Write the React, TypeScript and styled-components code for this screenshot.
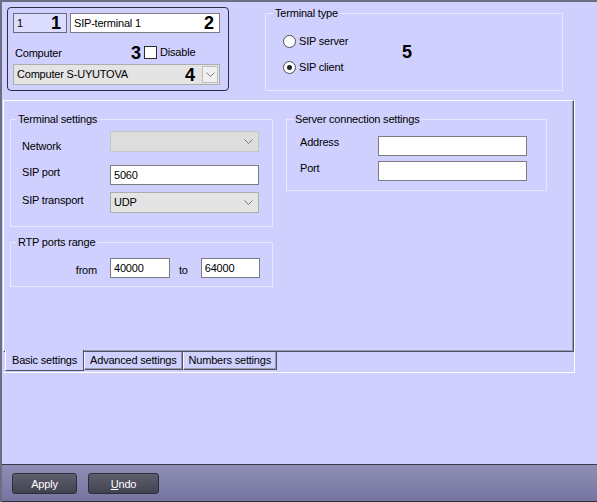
import React from 'react';
import styled, { createGlobalStyle } from 'styled-components';

const LAVENDER = '#d0d0fe';
const DARK_EDGE = '#505062';

const GlobalStyle = createGlobalStyle`
  html, body {
    margin: 0;
    padding: 0;
    background: ${LAVENDER};
  }
  body {
    font-family: "Liberation Sans", Arial, sans-serif;
    font-size: 11px;
    line-height: 13px;
    color: #000;
    overflow: hidden;
  }
  * {
    box-sizing: border-box;
  }
`;

const Window = styled.div`
  width: 597px;
  height: 502px;
  display: flex;
  flex-direction: column;
  background: ${LAVENDER};
  border-top: 2px solid #6e6e82;
  border-left: 2px solid #6e6e82;
  letter-spacing: -0.2px;
`;

/* ---------- header ---------- */

const Header = styled.div`
  display: flex;
  align-items: flex-start;
  height: 98px;
  padding: 5px 0 0 5px;
`;

const IdentityCard = styled.div`
  width: 222px;
  height: 84px;
  border: 1px solid #2e2e3e;
  border-radius: 4px;
  padding: 5px 8px 0 5px;
  display: flex;
  flex-direction: column;
`;

const CardRow = styled.div<{ $top?: number; $h?: number }>`
  display: flex;
  align-items: center;
  gap: 3px;
  margin-top: ${p => p.$top ?? 0}px;
  ${p => (p.$h ? `height: ${p.$h}px;` : '')}
`;

const Field = styled.div<{ $w: number; $h?: number }>`
  position: relative;
  width: ${p => p.$w}px;
  height: ${p => p.$h ?? 20}px;
`;

const TextBox = styled.div<{ $readOnly?: boolean }>`
  width: 100%;
  height: 100%;
  display: flex;
  align-items: center;
  padding: 0 2px 0 3px;
  background: ${p => (p.$readOnly ? '#dcdcfe' : '#fff')};
  border: 1px solid ${p => (p.$readOnly ? '#6a6a7a' : '#7c7c84')};
  white-space: nowrap;
`;

const Callout = styled.span<{ $right?: number }>`
  position: absolute;
  right: ${p => p.$right ?? 6}px;
  top: 50%;
  transform: translateY(-50%);
  font-family: Arial, "Liberation Sans", sans-serif;
  font-weight: bold;
  font-size: 18px;
  line-height: 18px;
  letter-spacing: 0;
`;

const Marker = styled.span<{ $top?: number }>`
  font-family: Arial, "Liberation Sans", sans-serif;
  font-weight: bold;
  font-size: 18px;
  line-height: 18px;
  letter-spacing: 0;
  margin-top: ${p => p.$top ?? 0}px;
`;

const CardLabel = styled.span`
  width: 115px;
  padding-left: 2px;
  padding-top: 1px;
`;

const CheckBox = styled.span`
  display: inline-block;
  width: 13px;
  height: 13px;
  background: #fff;
  border: 1px solid #2c2c2c;
`;

const Combo = styled.div<{ $disabled?: boolean }>`
  width: 100%;
  height: 100%;
  display: flex;
  align-items: center;
  justify-content: space-between;
  padding: 0 5px 0 3px;
  background: ${p => (p.$disabled ? '#dddddd' : '#e4e4e4')};
  border: 1px solid ${p => (p.$disabled ? '#c6c6c6' : '#adadad')};
  white-space: nowrap;
`;

const DropButton = styled.span`
  width: 16px;
  height: 17px;
  display: flex;
  align-items: center;
  justify-content: center;
  background: #f0f0f0;
  border: 1px solid #bdbdbd;
  margin-right: -4px;
`;

const Chevron = () => (
  <svg width="9" height="5" viewBox="0 0 9 5">
    <polyline points="0.5,0.5 4.5,4.5 8.5,0.5" fill="none" stroke="#7a7a7a" strokeWidth="1" />
  </svg>
);

/* ---------- group boxes ---------- */

const GroupBox = styled.fieldset<{ $w: number; $h?: number; $pad: string; $ml?: number }>`
  margin: 0 0 0 ${p => p.$ml ?? 0}px;
  padding: ${p => p.$pad};
  width: ${p => p.$w}px;
  ${p => (p.$h ? `height: ${p.$h}px;` : '')}
  border: 1px solid #e8e8fe;
  min-width: 0;
`;

// legend sits after the fieldset's left padding, so pull it back by $shift
const Caption = styled.legend<{ $shift: number }>`
  padding: 0 2px;
  margin-left: ${p => p.$shift}px;
  line-height: 12px;
`;

const FormRow = styled.div<{ $top?: number; $h?: number }>`
  display: flex;
  align-items: flex-start;
  height: ${p => p.$h ?? 20}px;
  margin-top: ${p => p.$top ?? 0}px;
`;

const RowLabel = styled.span<{ $w: number; $drop?: number; $right?: boolean }>`
  width: ${p => p.$w}px;
  padding-top: ${p => p.$drop ?? 0}px;
  text-align: ${p => (p.$right ? 'right' : 'left')};
  padding-right: ${p => (p.$right ? 13 : 0)}px;
  white-space: nowrap;
`;

const InlineLabel = styled.span<{ $drop?: number }>`
  padding-top: ${p => p.$drop ?? 0}px;
  margin: 0 13px 0 9px;
`;

/* ---------- terminal type ---------- */

const TypeBody = styled.div`
  display: flex;
  align-items: flex-start;
`;

const RadioList = styled.div`
  width: 119px;
  display: flex;
  flex-direction: column;
  gap: 13px;
`;

const RadioRow = styled.label`
  display: flex;
  align-items: center;
  gap: 3px;
  height: 13px;
`;

const RadioDot = styled.span<{ $checked?: boolean }>`
  width: 13px;
  height: 13px;
  border-radius: 50%;
  background: #fff;
  border: 1px solid #4c4c56;
  display: flex;
  align-items: center;
  justify-content: center;
  &::after {
    content: '';
    width: 5px;
    height: 5px;
    border-radius: 50%;
    background: ${p => (p.$checked ? '#222' : 'transparent')};
  }
`;

/* ---------- tabs ---------- */

const TabControl = styled.div`
  margin-left: 1px;
  width: 572px;
  border-right: 1px solid #fff;
  border-bottom: 1px solid #fff;
`;

const TabPage = styled.div`
  height: 252px;
  display: flex;
  align-items: flex-start;
  gap: 13px;
  padding: 12px 0 0 6px;
  border-top: 1px solid #fff;
  border-left: 1px solid #fff;
  border-right: 1px solid ${DARK_EDGE};
  border-bottom: 1px solid ${DARK_EDGE};
  box-shadow: inset -1px -1px 0 #9a9ab0;
`;

const Column = styled.div`
  display: flex;
  flex-direction: column;
  gap: 9px;
`;

const TabStrip = styled.div`
  display: flex;
  align-items: flex-start;
  height: 20px;
  padding-left: 2px;
`;

const Tab = styled.div<{ $active?: boolean }>`
  height: ${p => (p.$active ? 21 : 18)}px;
  margin-top: ${p => (p.$active ? -2 : 0)}px;
  padding: 0 ${p => (p.$active ? 6 : 5)}px;
  display: flex;
  align-items: center;
  background: ${LAVENDER};
  border-left: 1px solid ${p => (p.$active ? '#ffffff' : '#f6f6ff')};
  border-right: 1px solid ${DARK_EDGE};
  border-bottom: 1px solid ${DARK_EDGE};
  box-shadow: ${p => (p.$active ? 'none' : 'inset -1px -1px 0 #9a9ab0')};
  white-space: nowrap;
`;

const Filler = styled.div`
  flex: 1;
`;

/* ---------- footer ---------- */

const Footer = styled.div`
  height: 38px;
  display: flex;
  align-items: flex-start;
  gap: 11px;
  padding: 8px 0 0 10px;
  border-top: 1px solid #3a3a4c;
  border-bottom: 1px solid #2c2c3a;
  background: linear-gradient(#8e8eb6, #7575a0);
`;

const ActionButton = styled.button<{ $w: number }>`
  width: ${p => p.$w}px;
  height: 21px;
  padding: 0;
  border: 1px solid #2e2e3a;
  border-radius: 3px;
  background: linear-gradient(#5e5e6e, #424250);
  color: #fff;
  font-family: "Liberation Sans", Arial, sans-serif;
  font-size: 11px;
  letter-spacing: -0.2px;
  u {
    text-decoration: underline;
  }
`;

const App: React.FC = () => {
  return (
    <Window>
      <GlobalStyle />
      <Header>
        <IdentityCard>
          <CardRow>
            <Field $w={54}>
              <TextBox $readOnly>1</TextBox>
              <Callout $right={6}>1</Callout>
            </Field>
            <Field $w={150}>
              <TextBox>SIP-terminal 1</TextBox>
              <Callout $right={6}>2</Callout>
            </Field>
          </CardRow>
          <CardRow $top={13} $h={13}>
            <CardLabel>Computer</CardLabel>
            <Marker>3</Marker>
            <CheckBox />
            <span>Disable</span>
          </CardRow>
          <CardRow $top={5}>
            <Field $w={207} $h={21}>
              <Combo>
                <span>Computer S-UYUTOVA</span>
                <DropButton>
                  <Chevron />
                </DropButton>
              </Combo>
              <Callout $right={25}>4</Callout>
            </Field>
          </CardRow>
        </IdentityCard>

        <GroupBox $w={298} $h={84} $ml={36} $pad="16px 0 0 17px">
          <Caption $shift={-10}>Terminal type</Caption>
          <TypeBody>
            <RadioList>
              <RadioRow>
                <RadioDot />
                SIP server
              </RadioRow>
              <RadioRow>
                <RadioDot $checked />
                SIP client
              </RadioRow>
            </RadioList>
            <Marker $top={8}>5</Marker>
          </TypeBody>
        </GroupBox>
      </Header>

      <TabControl>
        <TabPage>
          <Column>
            <GroupBox $w={263} $pad="6px 13px 13px 11px">
              <Caption $shift={-6}>Terminal settings</Caption>
              <FormRow $h={21}>
                <RowLabel $w={88} $drop={9}>Network</RowLabel>
                <Field $w={149} $h={21}>
                  <Combo $disabled>
                    <span />
                    <Chevron />
                  </Combo>
                </Field>
              </FormRow>
              <FormRow $top={13}>
                <RowLabel $w={88} $drop={1}>SIP port</RowLabel>
                <Field $w={149}>
                  <TextBox>5060</TextBox>
                </Field>
              </FormRow>
              <FormRow $top={7} $h={21}>
                <RowLabel $w={88} $drop={2}>SIP transport</RowLabel>
                <Field $w={149} $h={21}>
                  <Combo>
                    <span>UDP</span>
                    <Chevron />
                  </Combo>
                </Field>
              </FormRow>
            </GroupBox>

            <GroupBox $w={263} $pad="10px 0 8px 11px">
              <Caption $shift={-6}>RTP ports range</Caption>
              <FormRow>
                <RowLabel $w={88} $drop={6} $right>from</RowLabel>
                <Field $w={60}>
                  <TextBox>40000</TextBox>
                </Field>
                <InlineLabel $drop={6}>to</InlineLabel>
                <Field $w={59}>
                  <TextBox>64000</TextBox>
                </Field>
              </FormRow>
            </GroupBox>
          </Column>

          <GroupBox $w={261} $pad="11px 19px 9px 13px">
            <Caption $shift={-7}>Server connection settings</Caption>
            <FormRow>
              <RowLabel $w={78}>Address</RowLabel>
              <Field $w={149}>
                <TextBox />
              </Field>
            </FormRow>
            <FormRow $top={5}>
              <RowLabel $w={78} $drop={1}>Port</RowLabel>
              <Field $w={149}>
                <TextBox />
              </Field>
            </FormRow>
          </GroupBox>
        </TabPage>
        <TabStrip>
          <Tab $active>Basic settings</Tab>
          <Tab>Advanced settings</Tab>
          <Tab>Numbers settings</Tab>
        </TabStrip>
      </TabControl>

      <Filler />

      <Footer>
        <ActionButton $w={65}>Apply</ActionButton>
        <ActionButton $w={71}>
          <u>U</u>ndo
        </ActionButton>
      </Footer>
    </Window>
  );
};

export default App;
